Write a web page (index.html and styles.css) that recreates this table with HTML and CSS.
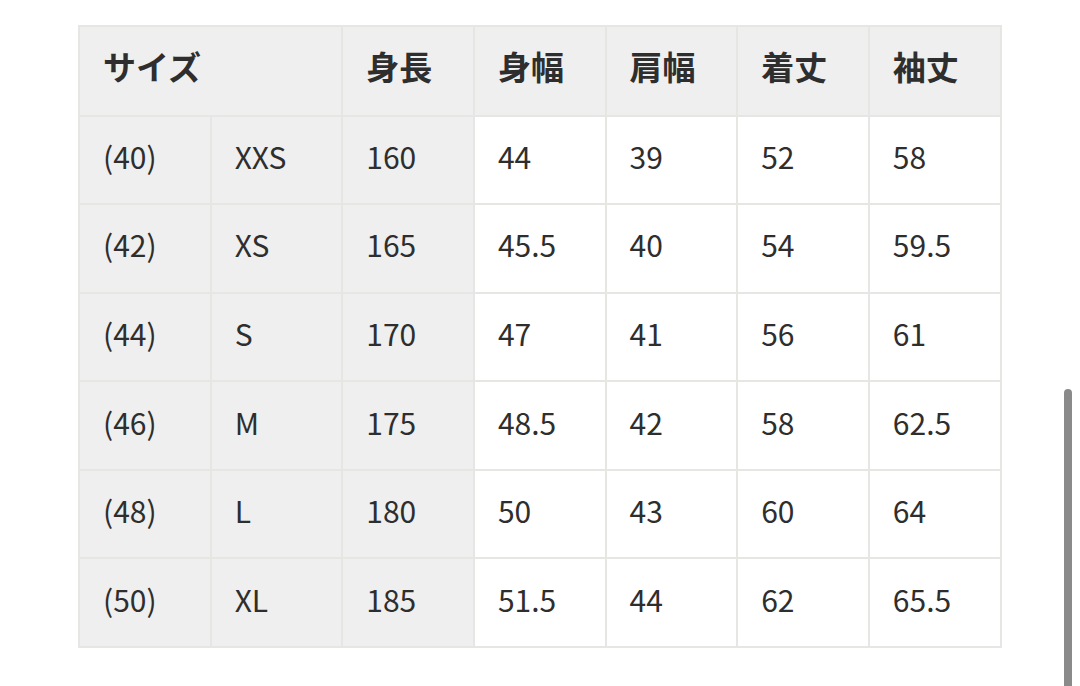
FILE: index.html
```html
<!DOCTYPE html>
<html lang="ja">
<head>
<meta charset="utf-8">
<link rel="stylesheet" href="styles.css">
</head>
<body>
<div class="page">
  <table class="size-table">
    <thead>
      <tr>
        <th colspan="2">サイズ</th>
        <th>身長</th>
        <th>身幅</th>
        <th>肩幅</th>
        <th>着丈</th>
        <th>袖丈</th>
      </tr>
    </thead>
    <tbody>
      <tr><td class="g">(40)</td><td class="g">XXS</td><td class="g">160</td><td>44</td><td>39</td><td>52</td><td>58</td></tr>
      <tr><td class="g">(42)</td><td class="g">XS</td><td class="g">165</td><td>45.5</td><td>40</td><td>54</td><td>59.5</td></tr>
      <tr><td class="g">(44)</td><td class="g">S</td><td class="g">170</td><td>47</td><td>41</td><td>56</td><td>61</td></tr>
      <tr><td class="g">(46)</td><td class="g">M</td><td class="g">175</td><td>48.5</td><td>42</td><td>58</td><td>62.5</td></tr>
      <tr><td class="g">(48)</td><td class="g">L</td><td class="g">180</td><td>50</td><td>43</td><td>60</td><td>64</td></tr>
      <tr><td class="g">(50)</td><td class="g">XL</td><td class="g">185</td><td>51.5</td><td>44</td><td>62</td><td>65.5</td></tr>
    </tbody>
  </table>
</div>
<div class="scrollbar"></div>
</body>
</html>
```
FILE: styles.css
```css
html, body {
  margin: 0;
  padding: 0;
  background: #ffffff;
}
body {
  width: 1080px;
  height: 686px;
  overflow: hidden;
  position: relative;
  font-family: "Noto Sans CJK JP", "Noto Sans", sans-serif;
  color: #2e2e2e;
}
.page {
  padding: 25px 0 0 78px;
}
.size-table {
  border-collapse: collapse;
  table-layout: fixed;
  width: 923.5px;
  border: 2px solid #e6e6e3;
}
.size-table th,
.size-table td {
  border: 2px solid #e6e6e3;
  text-align: left;
  padding: 0 0 8px 23px;
  vertical-align: middle;
  line-height: 1;
}
.size-table th {
  background: #efefef;
  font-weight: 700;
  font-size: 33px;
  height: 79.5px;
}
.size-table td {
  background: #ffffff;
  font-weight: 400;
  font-size: 30px;
  height: 78.6px;
}
.size-table td.g {
  background: #efefef;
}
.scrollbar {
  position: absolute;
  left: 1064px;
  top: 389px;
  width: 8px;
  height: 320px;
  border-radius: 4px;
  background: #8a8a8a;
}
```
